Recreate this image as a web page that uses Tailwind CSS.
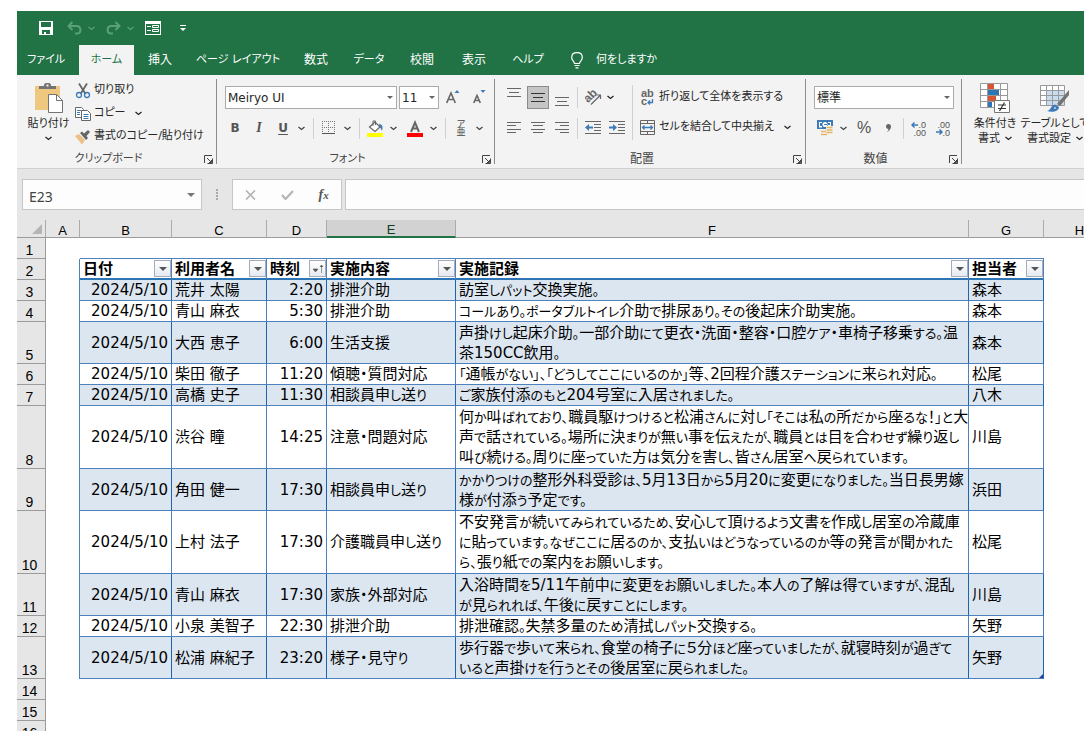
<!DOCTYPE html>
<html lang="ja">

<head>
    <meta charset="UTF-8">
    <meta name="viewport" content="width=device-width, initial-scale=1.0">
    <title>介護記録</title>
    <script src="https://cdn.jsdelivr.net/npm/@tailwindcss/browser@4"></script>
    <style>
        /* proportional kana, like a UI font */
        body {
            font-family: "DejaVu Sans", "Noto Sans CJK JP", sans-serif;
            font-feature-settings: "palt";
        }

        button, input, select {
            font-feature-settings: inherit;
        }
    </style>
</head>

<body class="h-screen overflow-hidden bg-white pt-[11px] pl-[17px] text-[11px] text-[#262626]">

    <!-- Shared shapes -->
    <svg class="hidden">
        <symbol id="chev" viewBox="0 0 7 5"><path d="M.5 1l3 2.500 3-2.500" fill="none" stroke="currentColor" stroke-width="1.300"/></symbol>
        <symbol id="tri" viewBox="0 0 8 4"><path d="M0 0h8L4 4z" fill="currentColor"/></symbol>
        <symbol id="launch" viewBox="0 0 9 9"><path d="M.5 8V.5H8M3 3l4 4M8.500 3.500v5h-5M7.500 5v2.500H5" fill="none" stroke="#444"/></symbol>
    </svg>

    <!-- Title bar -->
    <header class="bg-[#217346] text-white">
        <div class="flex h-[34px] items-center pl-[22px]">
            <button aria-label="上書き保存" class="w-[14px]">
                <svg class="h-[14px] w-[14px]" viewBox="0 0 14 14"><path fill="#fff" fill-rule="evenodd" d="M0 0h14v14H0zM2 1v5h10V1zM3 9v4h2v-2h2v2h4V9z"/></svg>
            </button>
            <button aria-label="元に戻す" class="ml-[14px] flex items-center gap-[6px] text-[#5aa077]">
                <svg class="h-[14px] w-[15px]" viewBox="0 0 15 14" fill="none" stroke="currentColor" stroke-width="2"><path d="M5.500 1L1.500 5l4 4M2 5h7.500c5 0 5 7 1 7.500H8"/></svg>
                <svg class="h-[5px] w-[7px]"><use href="#chev"/></svg>
            </button>
            <button aria-label="やり直し" class="ml-[11px] flex items-center gap-[6px] text-[#5aa077]">
                <svg class="h-[14px] w-[15px]" viewBox="0 0 15 14" fill="none" stroke="currentColor" stroke-width="2"><path d="M9.500 1l4 4-4 4M13 5H5.500c-5 0-5 7-1 7.500H7"/></svg>
                <svg class="h-[5px] w-[7px]"><use href="#chev"/></svg>
            </button>
            <button aria-label="フォーム" class="ml-[11px]">
                <svg class="h-[14px] w-4" viewBox="0 0 16 14"><path fill="#fff" fill-rule="evenodd" d="M0 0h16v14H0zM1 3v10h14V3z"/><path d="M2 5.500h4M2 9.500h4M7.500 4.500h6v2h-6zM7.500 8.500h6v2h-6z" fill="none" stroke="#fff"/></svg>
            </button>
            <button aria-label="クイック アクセスのカスタマイズ" class="ml-[19px]">
                <svg class="h-[7px] w-[6px]" viewBox="0 0 6 7"><path d="M0 0h6v1H0zM0 3h6L3 6z" fill="#fff"/></svg>
            </button>
        </div>

        <nav class="flex h-[30px] items-stretch whitespace-nowrap">
            <button class="w-[62px] pr-1">ファイル</button>
            <button class="w-[55px] bg-[#f3f3f3] text-[#217346]">ホーム</button>
            <button class="w-[52px] text-xs">挿入</button>
            <button class="w-[104px]">ページ レイアウト</button>
            <button class="w-[52px] text-xs">数式</button>
            <button class="w-[54px]">データ</button>
            <button class="w-[52px] text-xs">校閲</button>
            <button class="w-[52px] text-xs">表示</button>
            <button class="w-[56px]">ヘルプ</button>
            <button class="flex items-center gap-[13px] pl-[15px]">
                <svg class="h-[17px] w-3" viewBox="0 0 12 17" fill="none" stroke="#fff" stroke-width="1.200"><path d="M3.500 11.500c0-2-2.800-3-2.800-6C.7 2.500 3 .7 6 .7s5.300 1.800 5.300 4.800c0 3-2.800 4-2.800 6zM3.500 13.500h5M4.500 15.800h3"/></svg>
                何をしますか
            </button>
        </nav>
    </header>

    <!-- Ribbon -->
    <div class="flex h-[94px] overflow-hidden border-b border-[#d0d0d0] bg-[#f3f3f3] whitespace-nowrap">

        <!-- Clipboard -->
        <section class="my-1 flex w-[200px] shrink-0 flex-col border-r border-[#8c8c8c]">
            <div class="flex grow">
                <button class="flex w-[58px] flex-col items-center pt-1 pl-[5px]">
                    <svg class="h-[30px] w-[28px]" viewBox="0 0 28 30">
                        <path d="M0 3h25v24H0z" fill="#edc87e"/>
                        <path d="M4 6V3h5V1.500L10.500 0h4L16 1.500V3h5v3z" fill="#737373"/><path d="M11.500 1.500h2v2h-2z" fill="#f3f3f3"/>
                        <path d="M13.500 11.500h8l6 6v12h-14z" fill="#fff" stroke="#737373"/><path d="M21.500 11.500v6h6" fill="none" stroke="#737373"/>
                    </svg>
                    <span class="mt-[3px] leading-4">貼り付け</span>
                    <svg class="mt-[4px] h-[5px] w-[7px]"><use href="#chev"/></svg>
                </button>
                <div class="flex flex-col">
                    <button class="flex h-[23px] items-center gap-[3px]">
                        <svg class="h-4 w-4" viewBox="0 0 16 16" fill="none"><path d="M4 .5l6.500 10.500M12 .5L5.500 11" stroke="#666" stroke-width="1.800"/><circle cx="4" cy="12" r="2.500" stroke="#3d7ab8" stroke-width="1.300"/><circle cx="12" cy="12" r="2.500" stroke="#3d7ab8" stroke-width="1.300"/></svg>
                        切り取り
                    </button>
                    <button class="flex h-[23px] items-center gap-[3px]">
                        <svg class="h-4 w-4" viewBox="0 0 16 16"><path d="M.5 1.500h6l2 2v8h-8z" fill="#fff" stroke="#666"/><path d="M2 4.500h4M2 6.500h3M2 8.500h3" stroke="#3d7ab8"/><path d="M6.500 4.500h6l3 3v7h-9z" fill="#fff" stroke="#666"/><path d="M8.500 8.500h5M8.500 10.500h5M8.500 12.500h5" stroke="#3d7ab8"/></svg>
                        コピー
                        <svg class="ml-[6px] h-[5px] w-[7px]"><use href="#chev"/></svg>
                    </button>
                    <button class="flex h-[23px] items-center gap-[3px]">
                        <svg class="h-4 w-4" viewBox="0 0 16 16"><path d="M0 7l4-2 6 6-3 4.500z" fill="#edc087"/><path d="M5 4l2-1.500 2 2L13 1l2 2-3.500 4 1.500 2-2 2z" fill="#666"/></svg>
                        書式のコピー/貼り付け
                    </button>
                </div>
            </div>
            <div class="flex h-[10px] items-center pr-[3px] text-[#444]">
                <span class="grow pr-1 text-center">クリップボード</span>
                <button aria-label="クリップボードの詳細"><svg class="h-[9px] w-[9px]"><use href="#launch"/></svg></button>
            </div>
        </section>

        <!-- Font -->
        <section class="my-1 flex w-[278px] shrink-0 flex-col border-r border-[#8c8c8c]">
            <div class="flex h-[37px] items-center pl-2">
                <div class="relative">
                    <select aria-label="フォント名" class="h-[23px] w-[172px] appearance-none border border-[#ababab] bg-white pl-[2px] text-xs"><option>Meiryo UI</option></select>
                    <svg class="pointer-events-none absolute top-[10px] right-[4px] h-[3px] w-[6px] text-[#666]"><use href="#tri"/></svg>
                </div>
                <div class="relative ml-[2px]">
                    <select aria-label="フォント サイズ" class="h-[23px] w-10 appearance-none border border-[#ababab] bg-white pl-[2px] text-xs"><option>11</option></select>
                    <svg class="pointer-events-none absolute top-[10px] right-[4px] h-[3px] w-[6px] text-[#666]"><use href="#tri"/></svg>
                </div>
                <button aria-label="フォント サイズの拡大" class="flex w-[28px] justify-center">
                    <svg class="h-[15px] w-[14px]" viewBox="0 0 14 15"><path d="M.7 13L5 3 9.300 13M2.300 9.500h5.400" fill="none" stroke="#666" stroke-width="1.600"/><path d="M8.500 3L11 0l2.500 3z" fill="#3d7ab8"/></svg>
                </button>
                <button aria-label="フォント サイズの縮小" class="flex w-6 justify-center">
                    <svg class="h-[15px] w-[14px]" viewBox="0 0 14 15"><path d="M1.700 13L5 5.500 8.300 13M3 10.500h4" fill="none" stroke="#666" stroke-width="1.600"/><path d="M8.500 0h5L11 3z" fill="#3d7ab8"/></svg>
                </button>
            </div>
            <div class="flex h-6 items-center pl-[6px] text-[#444]">
                <button class="w-6 text-xs font-bold text-[#555]">B</button>
                <button class="w-6 font-['Liberation_Serif'] text-sm font-bold italic text-[#555]">I</button>
                <button class="w-6 text-xs font-bold text-[#555] underline underline-offset-2">U</button>
                <button aria-label="下線の種類" class="flex w-3 justify-center"><svg class="h-[5px] w-[7px]"><use href="#chev"/></svg></button>
                <span class="mr-[3px] ml-[6px] h-[21px] w-px bg-[#d0d0d0]"></span>
                <button aria-label="罫線" class="flex w-6 justify-center">
                    <svg class="h-[14px] w-[14px]" viewBox="0 0 14 14"><path d="M0 .5h14M0 6.500h14M.5 0v13M6.500 0v13M12.500 0v13" stroke="#777" stroke-dasharray="1 1"/><path d="M0 12.500h13" stroke="#555"/></svg>
                </button>
                <button aria-label="罫線の種類" class="flex w-3 justify-center"><svg class="h-[5px] w-[7px]"><use href="#chev"/></svg></button>
                <span class="mr-[3px] ml-[6px] h-[21px] w-px bg-[#d0d0d0]"></span>
                <button aria-label="塗りつぶしの色" class="flex w-6 justify-center">
                    <svg class="h-[17px] w-4" viewBox="0 0 16 17"><path d="M2.500 7L8 2l5 5-5 4.500z" fill="#fff" stroke="#666" stroke-width="1.200"/><path d="M6 6V1h2.500v4" fill="none" stroke="#666"/><path d="M12 4c4 0 4 4 3 7-1-3-3-4-3-7z" fill="#3d7ab8"/><path d="M0 13h16v4H0z" fill="#ff0"/></svg>
                </button>
                <button aria-label="塗りつぶしの色の一覧" class="flex w-3 justify-center"><svg class="h-[5px] w-[7px]"><use href="#chev"/></svg></button>
                <button aria-label="フォントの色" class="ml-1 flex w-6 justify-center">
                    <svg class="h-[17px] w-4" viewBox="0 0 16 17"><path d="M4 12l4-9.500L12 12M5.500 8.500h5" fill="none" stroke="#666" stroke-width="2"/><path d="M0 13h16v4H0z" fill="red"/></svg>
                </button>
                <button aria-label="フォントの色の一覧" class="flex w-3 justify-center"><svg class="h-[5px] w-[7px]"><use href="#chev"/></svg></button>
                <span class="mr-[3px] ml-[6px] h-[21px] w-px bg-[#d0d0d0]"></span>
                <button aria-label="ふりがな" class="flex w-6 flex-col items-center text-[9px] leading-2"><span>ア</span><span>亜</span></button>
                <button aria-label="ふりがなの設定" class="flex w-3 justify-center"><svg class="h-[5px] w-[7px]"><use href="#chev"/></svg></button>
            </div>
            <div class="mt-auto flex h-[10px] items-center pr-[3px] text-[#444]">
                <span class="grow pr-1 text-center">フォント</span>
                <button aria-label="フォントの詳細"><svg class="h-[9px] w-[9px]"><use href="#launch"/></svg></button>
            </div>
        </section>

        <!-- Alignment -->
        <section class="my-1 flex w-[311px] shrink-0 flex-col border-r border-[#8c8c8c]">
            <div class="flex grow items-start pl-[7px]">
                <div class="grid grid-cols-[24px_24px_24px] items-center justify-items-center">
                    <button aria-label="上揃え" class="flex h-9 w-[22px] items-center justify-center pb-[9px]"><svg class="h-[9px] w-[14px]" viewBox="0 0 14 9"><path d="M0 .5h14M2 4.500h10M0 8.500h14" stroke="#666"/></svg></button>
                    <button aria-label="上下中央揃え" class="flex h-[23px] w-[22px] items-center justify-center border border-[#8c8c8c] bg-[#c5c5c5]"><svg class="h-[9px] w-[14px]" viewBox="0 0 14 9"><path d="M0 .5h14M2 4.500h10M0 8.500h14" stroke="#333"/></svg></button>
                    <button aria-label="下揃え" class="flex h-9 w-[22px] items-center justify-center pt-2"><svg class="h-[9px] w-[14px]" viewBox="0 0 14 9"><path d="M0 .5h14M2 4.500h10M0 8.500h14" stroke="#666"/></svg></button>
                    <button aria-label="左揃え" class="flex h-6 items-center"><svg class="h-[11px] w-[14px]" viewBox="0 0 14 11"><path d="M0 .5h14M0 3.500h9M0 7.500h14M0 10.500h9" stroke="#666"/></svg></button>
                    <button aria-label="中央揃え" class="flex h-6 items-center"><svg class="h-[11px] w-[14px]" viewBox="0 0 14 11"><path d="M0 .5h14M2 3.500h10M0 7.500h14M2 10.500h10" stroke="#666"/></svg></button>
                    <button aria-label="右揃え" class="flex h-6 items-center"><svg class="h-[11px] w-[14px]" viewBox="0 0 14 11"><path d="M0 .5h14M5 3.500h9M0 7.500h14M5 10.500h9" stroke="#666"/></svg></button>
                </div>
                <div class="mx-[3px] flex flex-col gap-[10px] pt-2">
                    <span class="h-[21px] w-px bg-[#d0d0d0]"></span>
                    <span class="h-[21px] w-px bg-[#d0d0d0]"></span>
                </div>
                <div class="grid grid-cols-[24px_24px] items-center justify-items-center">
                    <button aria-label="方向" class="flex h-9 items-center">
                        <svg class="h-[17px] w-[17px]" viewBox="0 0 17 17"><g transform="rotate(-45 8 8)"><text x="0" y="9" font-size="12" font-weight="bold" font-family="Liberation Sans" fill="#666">ab</text></g><path d="M6 15.500l9-9M11.500 6h4v4" fill="none" stroke="#666" stroke-width="1.200"/></svg>
                    </button>
                    <button aria-label="方向の一覧" class="flex w-5 justify-start"><svg class="h-[5px] w-[7px]"><use href="#chev"/></svg></button>
                    <button aria-label="インデントを減らす" class="flex h-6 items-center">
                        <svg class="h-[13px] w-4" viewBox="0 0 16 13"><path d="M0 .5h16M9 3.500h7M9 6.500h7M9 9.500h7M0 12.500h16" stroke="#666"/><path d="M0 6.500l4-3.500v2.500h4v2H4V10z" fill="#3d7ab8"/></svg>
                    </button>
                    <button aria-label="インデントを増やす" class="flex h-6 items-center">
                        <svg class="h-[13px] w-4" viewBox="0 0 16 13"><path d="M0 .5h16M9 3.500h7M9 6.500h7M9 9.500h7M0 12.500h16" stroke="#666"/><path d="M8 6.500L4 3v2.500H0v2h4V10z" fill="#3d7ab8"/></svg>
                    </button>
                </div>
                <span class="mt-[6px] ml-[3px] h-[55px] w-px bg-[#d0d0d0]"></span>
                <div class="ml-[7px]">
                    <button class="flex h-9 items-center gap-1">
                        <svg class="h-[17px] w-[15px]" viewBox="0 0 15 17"><g font-size="11" font-weight="bold" font-family="Liberation Sans" fill="#666"><text x="1" y="8">ab</text><text x="1" y="16">c</text></g><path d="M12.500 10v3.500H8M10 11.500l-2 2 2 2" fill="none" stroke="#3d7ab8" stroke-width="1.300"/></svg>
                        折り返して全体を表示する
                    </button>
                    <button class="flex h-6 items-center gap-1">
                        <svg class="h-[15px] w-[15px]" viewBox="0 0 15 15" fill="none" stroke="#666"><path d="M.5.500h14v14H.5zM.5 3.500h14M.5 11.500h14M7.500.500v3M7.500 11.500v3"/><path d="M2.500 7.500h10M4.500 5.500l-2 2 2 2M10.500 5.500l2 2-2 2" stroke="#3d7ab8" stroke-width="1.300"/></svg>
                        セルを結合して中央揃え
                        <svg class="ml-[6px] h-[5px] w-[7px]"><use href="#chev"/></svg>
                    </button>
                </div>
            </div>
            <div class="flex h-[10px] items-center pr-[3px] text-xs text-[#444]">
                <span class="grow pr-1 text-center">配置</span>
                <button aria-label="配置の詳細"><svg class="h-[9px] w-[9px]"><use href="#launch"/></svg></button>
            </div>
        </section>

        <!-- Number -->
        <section class="my-1 flex w-[156px] shrink-0 flex-col border-r border-[#8c8c8c]">
            <div class="flex h-[37px] items-center pl-2">
                <div class="relative">
                    <select aria-label="表示形式" class="h-[23px] w-[140px] appearance-none border border-[#ababab] bg-white pl-[2px] text-xs"><option>標準</option></select>
                    <svg class="pointer-events-none absolute top-[10px] right-[4px] h-[3px] w-[6px] text-[#666]"><use href="#tri"/></svg>
                </div>
            </div>
            <div class="flex h-6 items-center pl-[7px] text-[#444]">
                <button aria-label="通貨表示形式" class="flex w-6 justify-center">
                    <svg class="h-4 w-4" viewBox="0 0 16 16"><path d="M0 0h16v9H0z" fill="#3d7ab8"/><path d="M2 2h3v1H3v3h2v1.500H2zM14 2h-3v1h2v2h-2v1h3z" fill="#fff"/><circle cx="8" cy="4.500" r="2.500" fill="#fff"/><path d="M7 4h3v1H7z" fill="#3d7ab8"/><path d="M9 6h7v8H9zM4 10h6v6H4z" fill="#f3f3f3"/><path d="M9.500 7.500h6M9.500 10h6M9.500 12.500h6M4 11.500h5M4 14.500h6" stroke="#e5b566" stroke-width="1.700"/></svg>
                </button>
                <button aria-label="通貨の一覧" class="flex w-3 justify-center"><svg class="h-[5px] w-[7px]"><use href="#chev"/></svg></button>
                <button class="ml-[3px] w-6 font-['Liberation_Sans'] text-base text-[#555]">%</button>
                <button aria-label="桁区切り" class="flex w-6 justify-center"><svg class="h-2 w-[5px]" viewBox="0 0 5 8"><path d="M0 2.500a2.400 2.400 0 0 1 5 0C5 5 3 7.500.5 8 2 7 2.500 6 2.500 5 1 5 0 4 0 2.500z" fill="#666"/></svg></button>
                <span class="mx-[3px] h-[21px] w-px bg-[#d0d0d0]"></span>
                <button aria-label="小数点以下の表示桁数を増やす" class="flex w-6 justify-center">
                    <svg class="h-[15px] w-4" viewBox="0 0 16 15"><path d="M1 4h6M3.500 1.500L1 4l2.500 2.500" fill="none" stroke="#3d7ab8" stroke-width="1.500"/><g font-size="9" font-family="Liberation Sans" fill="#555"><text x="7.500" y="7">.0</text><text x="2.500" y="14.500">.00</text></g></svg>
                </button>
                <button aria-label="小数点以下の表示桁数を減らす" class="flex w-6 justify-center">
                    <svg class="h-[15px] w-4" viewBox="0 0 16 15"><path d="M1 11h6M4.500 8.500L7 11l-2.500 2.500" fill="none" stroke="#3d7ab8" stroke-width="1.500"/><g font-size="9" font-family="Liberation Sans" fill="#555"><text x="2.500" y="7">.00</text><text x="7.500" y="14.500">.0</text></g></svg>
                </button>
            </div>
            <div class="mt-auto flex h-[10px] items-center pr-[3px] text-xs text-[#444]">
                <span class="grow pr-1 text-center">数値</span>
                <button aria-label="数値の詳細"><svg class="h-[9px] w-[9px]"><use href="#launch"/></svg></button>
            </div>
        </section>

        <!-- Styles -->
        <section class="my-1 flex shrink-0 items-start pl-[6px] leading-[15px]">
            <button class="flex w-[54px] flex-col items-center pt-1">
                <svg class="h-[30px] w-[30px]" viewBox="0 0 30 30">
                    <path d="M.5.500h27v24H.5z" fill="#fff"/><path d="M8 1h6v6H8z" fill="#d65532"/><path d="M8 7h11v6H8z" fill="#2e75b6"/><path d="M8 13h8v6H8z" fill="#d65532"/><path d="M8 19h4v6H8z" fill="#2e75b6"/>
                    <path d="M.5.500h27v24H.5zM.5 6.500h27M.5 12.500h27M.5 18.500h27M7.500.500v24M20.500.500v24" fill="none" stroke="#999"/>
                    <path d="M14.500 17.500h15v12h-15z" fill="#fff" stroke="#777"/><path d="M18 22h8M18 25.500h8M24.500 19.500l-5 8.500" stroke="#333" stroke-width="1.200"/>
                </svg>
                <span class="mt-[3px]">条件付き</span>
                <span class="flex items-center gap-[5px]">書式<svg class="h-[5px] w-[7px]"><use href="#chev"/></svg></span>
            </button>
            <button class="flex w-[66px] flex-col items-center pt-1">
                <svg class="h-[30px] w-[30px]" viewBox="0 0 30 30">
                    <path d="M.5 2.500h24v20H.5z" fill="#fff"/><path d="M6.500 7.500h18v15h-18z" fill="#c9dcef"/>
                    <path d="M.5 2.500h24v20H.5zM.5 7.500h24M.5 12.500h24M.5 17.500h24M6.500 2.500v20M12.500 2.500v20M18.500 2.500v20" fill="none" stroke="#999"/>
                    <path d="M29 7v5l-9 11-3-2z" fill="#737373"/><path d="M7 28c4-1 4-6 8-6.500l4 2.500c0 4-6 6-12 4z" fill="#3d7ab8"/><path d="M14 25h2" stroke="#fff"/>
                </svg>
                <span class="mt-[3px]">テーブルとして</span>
                <span class="flex items-center gap-[5px]">書式設定<svg class="h-[5px] w-[7px]"><use href="#chev"/></svg></span>
            </button>
        </section>
    </div>

    <!-- Formula bar -->
    <div class="flex h-[51px] items-center bg-[#e6e6e6] pl-[5px]">
        <div class="flex h-[31px] w-[180px] items-center border border-[#c6c6c6] bg-[#fdfdfd]">
            <input aria-label="名前ボックス" value="E23" class="h-full min-w-0 grow pt-1 pl-[6px] font-['Noto_Sans'] text-sm text-[#444] outline-none">
            <button aria-label="名前の一覧" class="px-[6px] text-[#777]"><svg class="h-1 w-2"><use href="#tri"/></svg></button>
        </div>
        <svg class="mx-[14px] h-[11px] w-[2px]" viewBox="0 0 2 11"><path d="M0 0h2v2H0zM0 3h2v2H0zM0 6h2v2H0zM0 9h2v2H0z" fill="#aaa"/></svg>
        <div class="flex h-[31px] w-[110px] items-center justify-around border border-[#c6c6c6] bg-[#fdfdfd]">
            <button aria-label="キャンセル"><svg class="h-[10px] w-[11px]" viewBox="0 0 11 10"><path d="M1 .5l9 9M10 .5l-9 9" stroke="#b5b5b5" stroke-width="1.700"/></svg></button>
            <button aria-label="入力"><svg class="h-[10px] w-[13px]" viewBox="0 0 13 10"><path d="M1 5l3.500 4L12 1" fill="none" stroke="#b5b5b5" stroke-width="2.200"/></svg></button>
            <button aria-label="関数の挿入" class="font-['Liberation_Serif'] text-sm font-bold italic text-[#555]">f<span class="text-[11px]">x</span></button>
        </div>
        <input aria-label="数式バー" class="ml-[3px] h-[31px] min-w-0 grow border border-r-0 border-[#c6c6c6] bg-[#fdfdfd] px-2 text-sm outline-none">
    </div>

    <!-- Sheet, column H runs past the window edge -->
    <table class="w-[calc(100%+32px)] table-fixed border-separate border-spacing-0 text-[15px] leading-5 whitespace-nowrap text-black">
        <colgroup>
            <col class="w-[29px]">
            <col class="w-[34px]">
            <col class="w-[92px]">
            <col class="w-[95px]">
            <col class="w-[60px]">
            <col class="w-[129px]">
            <col class="w-[513px]">
            <col class="w-[75px]">
            <col>
        </colgroup>
        <thead id="letters"></thead>
        <tbody id="rows"></tbody>
    </table>

    <script>
        const records = [
            ['2024/5/10', '荒井 太陽', '2:20', '排泄介助', ['訪室しパット交換実施。'], '森本'],
            ['2024/5/10', '青山 麻衣', '5:30', '排泄介助', ['コールあり。ポータブルトイレ介助で排尿あり。その後起床介助実施。'], '森本'],
            ['2024/5/10', '大西 恵子', '6:00', '生活支援', ['声掛けし起床介助。一部介助にて更衣・洗面・整容・口腔ケア・車椅子移乗する。温', '茶150CC飲用。'], '森本'],
            ['2024/5/10', '柴田 徹子', '11:20', '傾聴・質問対応', ['「通帳がない」、「どうしてここにいるのか」等、2回程介護ステーションに来られ対応。'], '松尾'],
            ['2024/5/10', '高橋 史子', '11:30', '相談員申し送り', ['ご家族付添のもと204号室に入居されました。'], '八木'],
            ['2024/5/10', '渋谷 瞳', '14:25', '注意・問題対応', ['何か叫ばれており、職員駆けつけると松浦さんに対し「そこは私の所だから座るな！」と大', '声で話されている。場所に決まりが無い事を伝えたが、職員とは目を合わせず繰り返し', '叫び続ける。周りに座っていた方は気分を害し、皆さん居室へ戻られています。'], '川島'],
            ['2024/5/10', '角田 健一', '17:30', '相談員申し送り', ['かかりつけの整形外科受診は、5月13日から5月20に変更になりました。当日長男嫁', '様が付添う予定です。'], '浜田'],
            ['2024/5/10', '上村 法子', '17:30', '介護職員申し送り', ['不安発言が続いてみられているため、安心して頂けるよう文書を作成し居室の冷蔵庫', 'に貼っています。なぜここに居るのか、支払いはどうなっているのか等の発言が聞かれた', 'ら、張り紙での案内をお願いします。'], '松尾'],
            ['2024/5/10', '青山 麻衣', '17:30', '家族・外部対応', ['入浴時間を5/11午前中に変更をお願いしました。本人の了解は得ていますが、混乱', 'が見られれば、午後に戻すことにします。'], '川島'],
            ['2024/5/10', '小泉 美智子', '22:30', '排泄介助', ['排泄確認。失禁多量のため清拭しパット交換する。'], '矢野'],
            ['2024/5/10', '松浦 麻紀子', '23:20', '様子・見守り', ['歩行器で歩いて来られ、食堂の椅子に５分ほど座っていましたが、就寝時刻が過ぎて', 'いると声掛けを行うとその後居室に戻られました。'], '矢野'],
        ];
        const heights = { 1: 'h-[21px]', 2: 'h-[42px]', 3: 'h-[63px]' };

        // Kana is set a little smaller than kanji
        function smallKana(text) {
            return text.replace(/[ぁ-んァ-ヶー、。「」]+/g, '<span class="text-[13px] leading-none">$&</span>');
        }

        // Column letters
        const letters = ['A', 'B', 'C', 'D', 'E', 'F', 'G', 'H'].map(letter => {
            const look = letter === 'E'
                ? 'border-b-2 border-b-[#217346] bg-[#d2d2d2] pt-[2px] text-[#0f3d22]'
                : 'border-b border-b-[#9b9b9b] bg-[#e6e6e6] pt-[3px]';
            return `<th class="border-r border-r-[#ababab] px-0 pb-0 font-normal ${look}">${letter}</th>`;
        }).join('');
        document.getElementById('letters').innerHTML = `
            <tr class="h-[18px] font-['Liberation_Sans'] text-[13px] leading-[13px]">
                <th class="border-r border-b border-r-[#ababab] border-b-[#9b9b9b] bg-[#e6e6e6] p-0 pr-[3px]">
                    <svg class="ml-auto h-[10px] w-[10px]" viewBox="0 0 10 10"><path d="M10 0v10H0z" fill="#b5b5b5"/></svg>
                </th>${letters}
            </tr>`;

        // Row number at the left edge
        function rowNumber(n) {
            return `<th class="border-r border-b border-[#9b9b9b] bg-[#e6e6e6] p-0 pr-[3px] align-bottom font-['Liberation_Sans'] text-sm leading-[15px] font-normal">${n}</th>`;
        }

        // Table heading with its filter button
        function heading(text, sorted) {
            const mark = sorted
                ? '<path d="M1 6h5L3.500 9zM9.500 10V2M8 4l1.500-2L11 4" fill="#555" stroke="#555" stroke-width=".6"/>'
                : '<path d="M2 4h8L6 8z" fill="#555"/>';
            return `<th class="border-r border-b-2 border-r-[#4f81bd] border-b-[#2e75b6] p-0 pl-[3px] text-left leading-[18px]">
                <div class="flex h-[18px] items-center justify-between">${text}
                    <button aria-label="フィルター" class="flex h-[17px] w-[17px] items-center justify-center border border-[#a5adba] bg-linear-to-b from-white to-[#e6eaf1]">
                        <svg class="h-3 w-3" viewBox="0 0 12 12">${mark}</svg>
                    </button>
                </div>
            </th>`;
        }

        let html = `<tr class="h-[21px]">${rowNumber(1)}<td></td><td colspan="6" class="border-b border-[#4f81bd] p-0"></td><td></td></tr>`;
        html += `<tr class="h-[21px]">${rowNumber(2)}<td class="border-r border-[#4f81bd] p-0"></td>
            ${heading('日付')}${heading('利用者名')}${heading('時刻', true)}${heading('実施内容')}${heading('実施記録')}${heading('担当者')}<td></td></tr>`;

        records.forEach(([date, name, time, kind, note, staff], i) => {
            const cell = i % 2 === 0
                ? 'border-r border-b border-r-[#1f65ad] border-b-[#4f81bd] bg-[#dce6f1] py-0 px-[3px]'
                : 'border-r border-b border-[#4f81bd] py-0 px-[3px]';
            const corner = i === records.length - 1
                ? '<svg class="absolute right-0 bottom-0 h-1 w-1" viewBox="0 0 4 4"><path d="M4 0v4H0z" fill="#283fa0"/></svg>'
                : '';
            html += `<tr class="${heights[note.length]}">${rowNumber(i + 3)}<td class="border-r border-[#4f81bd] p-0"></td>
                <td class="${cell} text-right">${date}</td>
                <td class="${cell}">${name}</td>
                <td class="${cell} text-right">${time}</td>
                <td class="${cell}">${smallKana(kind)}</td>
                <td class="${cell}">${note.map(smallKana).join('<br>')}</td>
                <td class="${cell} relative">${staff}${corner}</td><td></td></tr>`;
        });

        for (let n = 14; n <= 16; n++) {
            html += `<tr class="h-[21px]">${rowNumber(n)}<td colspan="8"></td></tr>`;
        }
        document.getElementById('rows').innerHTML = html;
    </script>
</body>

</html>
